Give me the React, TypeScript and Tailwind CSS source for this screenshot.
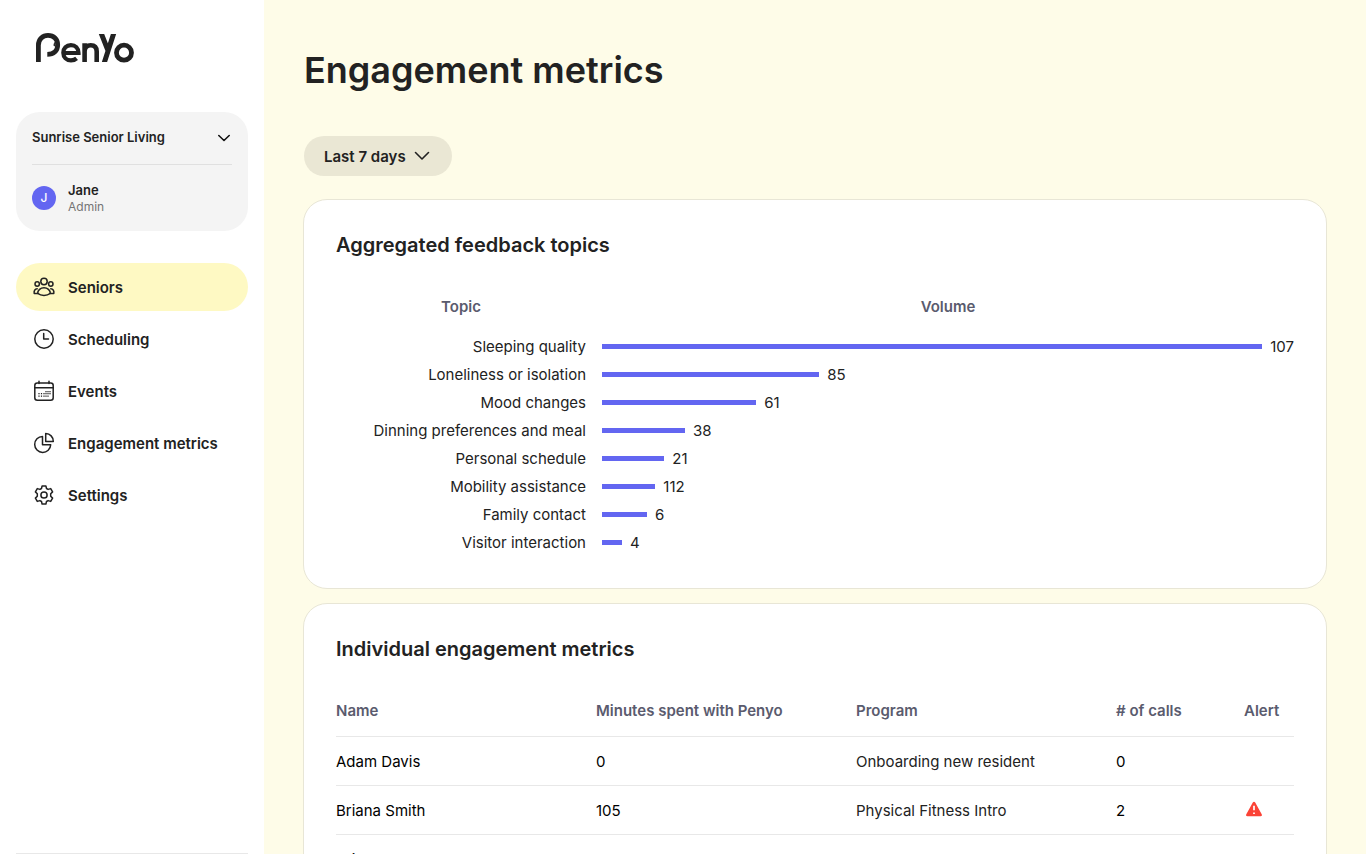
import type { ReactNode } from "react";

type IconProps = { children: ReactNode };

function NavIcon({ children }: IconProps) {
  return (
    <svg viewBox="0 0 24 24" className="size-6 shrink-0" fill="none" stroke="currentColor" strokeWidth="1.5" strokeLinecap="round" strokeLinejoin="round" aria-hidden="true">
      {children}
    </svg>
  );
}

function Logo() {
  return (
    <svg viewBox="0 0 98 30" className="h-[30px] w-[98px]" fill="none" stroke="#222" strokeWidth="4.8" role="img" aria-label="PenYo">
      <clipPath id="logo-stem">
        <rect x="60" y="1" width="24" height="28" />
      </clipPath>
      <path d="M2.4 29V12.2C2.4 6 6.900 2.400 12 2.400c5.700 0 9.700 3.900 9.700 9.400 0 5.800-3.800 9.600-10.400 9.600" />
      <path d="M18.600 9.500 17.800 12.400 19.300 13.200Z" fill="#222" strokeWidth=".8" />
      <path d="M26.500 20H42.500C42.500 15.200 39.300 12.100 34.900 12.100c-4.500 0-7.600 3.200-7.600 7.600 0 4.500 3.200 7.700 7.700 7.700 2.200 0 4-.6 5.600-2" strokeWidth="4.200" />
      <path d="M48.600 29V10.200M48.600 29V18.500c0-4 2.500-6.300 6.100-6.300 3.800 0 6 2.300 6 6.300V29" strokeWidth="4.600" />
      <g clipPath="url(#logo-stem)" strokeWidth="5">
        <path d="M64.900-.5 72 17.500M78-.5 68 30.500" />
      </g>
      <circle cx="88" cy="19.700" r="7.500" />
    </svg>
  );
}

const calendarDots = [
  [16, 12], [18, 12], [14, 12],
  [7, 14], [9.500, 14], [12, 14], [14, 14], [16, 14], [18, 14],
  [7, 16.500], [9.500, 16.500], [12, 16.500], [14, 16.500], [16, 16.500],
];

const navItems = [
  {
    label: "Seniors",
    icon: (
      <>
        <circle cx="12" cy="6.500" r="3.200" />
        <circle cx="5.200" cy="9" r="2.200" />
        <circle cx="18.800" cy="9" r="2.200" />
        <path d="M5.700 18.400c0-3.200 2.800-5.600 6.300-5.600s6.300 2.400 6.300 5.600c-1.700 1.300-3.800 2-6.300 2s-4.600-.7-6.300-2Z" />
        <path d="M5.600 18.400H2.200c-.5-2.500.7-4.400 3-4.600M18.400 18.400h3.400c.5-2.500-.7-4.400-3-4.600" />
      </>
    ),
  },
  {
    label: "Scheduling",
    icon: (
      <>
        <circle cx="12" cy="12" r="9.200" />
        <path d="M11.700 6.500V12h4.800" />
      </>
    ),
  },
  {
    label: "Events",
    icon: (
      <>
        <rect x="2.800" y="4" width="18.400" height="17.200" rx="2.500" />
        <path d="M2.800 8.800h18.400M7 2.200V4.500M17 2.200V4.500" />
        {calendarDots.map(([x, y]) => (
          <rect key={`${x}-${y}`} x={x - 0.6} y={y} width="1.200" height="1.300" fill="currentColor" stroke="none" />
        ))}
      </>
    ),
  },
  {
    label: "Engagement metrics",
    icon: (
      <>
        <path d="M10.500 5.400a8 8 0 1 0 8.200 8.300h-8.200Z" />
        <path d="M13.700 2.600v7.800h7.600c0-4.500-3.200-7.600-7.600-7.800Z" />
      </>
    ),
  },
  {
    label: "Settings",
    icon: (
      <>
        <path d="M10.100 2.900h3.800l.6 2.600 1.600.9 2.600-.8 1.900 3.300-1.900 1.900v2.400l1.900 1.900-1.900 3.300-2.600-.8-1.600.9-.6 2.600h-3.800l-.6-2.600-1.600-.9-2.600.8-1.900-3.300 1.900-1.900v-2.400L3.400 8.900l1.900-3.300 2.600.8 1.600-.9Z" />
        <circle cx="12" cy="12" r="3.100" />
      </>
    ),
  },
];

const topics = [
  { name: "Sleeping quality", volume: 107, share: 100 },
  { name: "Loneliness or isolation", volume: 85, share: 31.4 },
  { name: "Mood changes", volume: 61, share: 22.3 },
  { name: "Dinning preferences and meal", volume: 38, share: 12 },
  { name: "Personal schedule", volume: 21, share: 9 },
  { name: "Mobility assistance", volume: 112, share: 7.7 },
  { name: "Family contact", volume: 6, share: 6.5 },
  { name: "Visitor interaction", volume: 4, share: 2.9 },
];

const residents = [
  { name: "Adam Davis", minutes: 0, program: "Onboarding new resident", calls: 0, alert: false },
  { name: "Briana Smith", minutes: 105, program: "Physical Fitness Intro", calls: 2, alert: true },
  { name: "Brian Carl", minutes: 10, program: "", calls: 4, alert: false },
];

function Chevron() {
  return (
    <svg viewBox="0 0 16 16" className="size-4 shrink-0" fill="none" stroke="currentColor" strokeWidth="1.600" strokeLinecap="round" strokeLinejoin="round" aria-hidden="true">
      <path d="M1.500 4.500 8 11l6.500-6.500" />
    </svg>
  );
}

function AlertIcon() {
  return (
    <svg viewBox="0 0 20 20" className="size-5" role="img" aria-label="Alert">
      <path d="M10 2.800c.5 0 .9.200 1.200.7l6.500 11.700c.6 1 .1 2-1.100 2H3.400c-1.200 0-1.700-1-1.100-2L8.800 3.500c.3-.5.700-.7 1.200-.7Z" fill="#fb4336" />
      <path d="M10 6.800v4.400M10 13.400v1.600" stroke="#fff" strokeWidth="1.700" />
    </svg>
  );
}

export default function App() {
  return (
    <div className="flex h-screen overflow-hidden bg-[#fefce8] font-['Inter',sans-serif] text-base text-[#222]">
      <aside className="flex w-[264px] shrink-0 flex-col bg-white px-4">
        <div className="px-5 pt-[33px] pb-[49px]">
          <Logo />
        </div>
        <section className="rounded-3xl bg-[#f4f4f4] px-4">
          <button type="button" className="flex h-[53px] w-full items-center justify-between border-b border-[#e0e0e0] text-[13px] font-semibold">
            Sunrise Senior Living
            <svg viewBox="0 0 16 16" className="size-4" fill="none" stroke="#111" strokeWidth="1.600" strokeLinecap="round" strokeLinejoin="round" aria-hidden="true">
              <path d="m2.800 5.500 5.200 5 5.200-5" />
            </svg>
          </button>
          <div className="flex h-[66px] items-center gap-3">
            <span className="flex size-6 items-center justify-center rounded-full bg-[#6366f1] text-xs font-medium text-white">J</span>
            <div className="pt-0.5">
              <p className="text-[13px] leading-4 font-semibold">Jane</p>
              <p className="text-xs leading-[18px] text-[#757575]">Admin</p>
            </div>
          </div>
        </section>
        <nav className="mt-8 flex flex-col gap-1">
          {navItems.map((item, i) => (
            <a key={item.label} href="#" className={`flex h-12 items-center gap-3 rounded-full px-4 text-[15px] font-semibold ${i === 0 ? "bg-[#fef9c3]" : ""}`}>
              <NavIcon>{item.icon}</NavIcon>
              <span className="pt-0.5">{item.label}</span>
            </a>
          ))}
        </nav>
        <div className="mt-auto border-t border-[#e8e8e8]" />
      </aside>

      <main className="min-w-0 flex-1 overflow-y-auto px-10 pt-10 [scrollbar-width:none]">
        <h1 className="text-4xl leading-[60px] font-semibold">Engagement metrics</h1>
        <button type="button" className="mt-9 flex h-10 items-center gap-2 rounded-full bg-[#eae7d4] pr-[22px] pl-5 text-[15px] font-semibold">
          <span className="pt-0.5">Last 7 days</span>
          <Chevron />
        </button>

        <section className="-mx-px mt-[23px] rounded-3xl border border-[#e8e6d6] bg-white p-8">
          <h2 className="text-xl leading-[26px] font-semibold">Aggregated feedback topics</h2>
          <table className="mt-6 w-full table-fixed">
            <colgroup>
              <col className="w-[266px]" />
              <col />
            </colgroup>
            <thead>
              <tr className="h-[50px] text-[15px] text-[#5a5b6e]">
                <th className="pr-4 font-semibold">Topic</th>
                <th className="font-semibold">Volume</th>
              </tr>
            </thead>
            <tbody>
              {topics.map((topic) => (
                <tr key={topic.name} className="h-7 text-[15px]">
                  <td className="pt-0.5 pr-4 text-right whitespace-nowrap">{topic.name}</td>
                  <td>
                    <div className="flex items-center gap-2">
                      <div className="h-[5px] bg-[#6366f1]" style={{ width: `${topic.share}%` }} />
                      <span className="shrink-0 pt-0.5">{topic.volume}</span>
                    </div>
                  </td>
                </tr>
              ))}
            </tbody>
          </table>
        </section>

        <section className="-mx-px mt-[14px] rounded-3xl border border-[#e8e6d6] bg-white p-8">
          <h2 className="text-xl leading-[26px] font-semibold">Individual engagement metrics</h2>
          <table className="mt-6 w-full table-fixed text-left text-[15px]">
            <colgroup>
              <col />
              <col />
              <col />
              <col className="w-32" />
              <col className="w-[50px]" />
            </colgroup>
            <thead>
              <tr className="h-[50px] border-b border-[#e8e8e8] text-[#5a5b6e]">
                <th className="font-semibold">Name</th>
                <th className="font-semibold">Minutes spent with Penyo</th>
                <th className="font-semibold">Program</th>
                <th className="font-semibold"># of calls</th>
                <th className="font-semibold">Alert</th>
              </tr>
            </thead>
            <tbody>
              {residents.map((resident) => (
                <tr key={resident.name} className="h-[49px] border-b border-[#e8e8e8]">
                  <td className="pt-[3px] text-black">{resident.name}</td>
                  <td className="pt-[3px] text-black">{resident.minutes}</td>
                  <td className="pt-[3px]">{resident.program}</td>
                  <td className="pt-[3px] text-black">{resident.calls}</td>
                  <td className="pb-0.5">{resident.alert && <AlertIcon />}</td>
                </tr>
              ))}
            </tbody>
          </table>
        </section>
      </main>
    </div>
  );
}
